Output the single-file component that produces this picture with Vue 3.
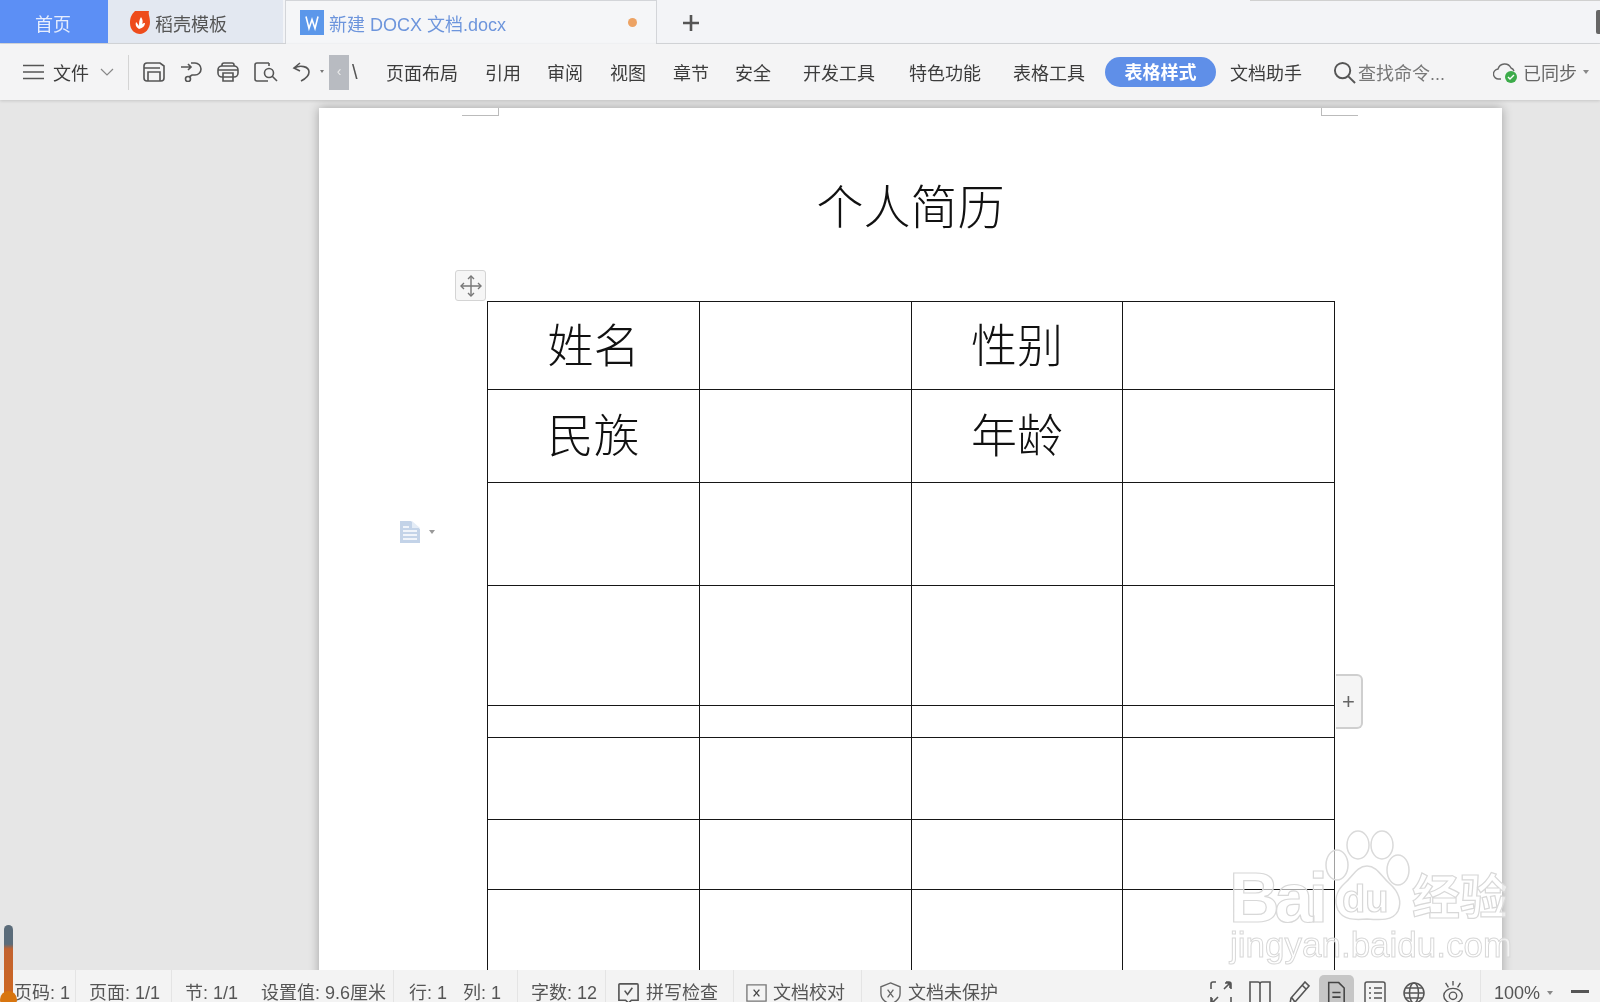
<script setup>
const navItems = [
  { label: '页面布局', cls: 'n0' }, { label: '引用', cls: 'n1' }, { label: '审阅', cls: 'n2' },
  { label: '视图', cls: 'n1' }, { label: '章节', cls: 'n1' }, { label: '安全', cls: 'n2' },
  { label: '开发工具', cls: 'n3' }, { label: '特色功能', cls: 'n4' }, { label: '表格工具', cls: 'n3' },
]
const rows = [
  ['姓名', '', '性别', ''], ['民族', '', '年龄', ''], ['', '', '', ''], ['', '', '', ''],
  ['', '', '', ''], ['', '', '', ''], ['', '', '', ''], ['', '', '', ''],
]
</script>

<template>
  <div class="app">
    <header class="tabbar">
      <div class="tab home">首页</div>
      <div class="tab template">
        <svg class="flame" viewBox="0 0 20 23"><path d="M5 0h14c-1 3 1 6 1 11 0 7-5 12-10 12S0 19 0 12C0 6 2 3 5 0z" fill="#ee4c1c"/><path d="M9 18c-3-2-4-4-3-7 1 1 2 2 3 4 0-3 0-6 2-9 2 3 2 5 1 7 1-1 2-1 3-1 0 3-2 5-6 6z" fill="#fff"/></svg>
        <span>稻壳模板</span>
      </div>
      <div class="tab doc">
        <span class="wicon"><svg viewBox="0 0 24 24"><path d="M6 6l3 12 3-9 3 9 3-12" fill="none" stroke="#fff" stroke-width="1.6"/></svg></span>
        <span class="doc-name">新建 DOCX 文档.docx</span>
        <span class="dot"></span>
      </div>
      <div class="plus">
        <svg viewBox="0 0 18 18"><path d="M9 1v16M1 9h16" stroke="#555" stroke-width="2.6"/></svg>
      </div>
      <div class="corner-handle"></div>
    </header>

    <nav class="toolbar">
      <svg class="ic-menu" viewBox="0 0 21 16"><path d="M0 1.5h21M0 8h21M0 14.500h21" stroke="#555" stroke-width="1.6"/></svg>
      <span class="file">文件</span>
      <svg class="ic-chev" viewBox="0 0 14 8"><path d="M1 1l6 6 6-6" fill="none" stroke="#888" stroke-width="1.2"/></svg>
      <span class="tb-div"></span>
      <svg class="qi first" viewBox="0 0 22 20" fill="none" stroke="#555" stroke-width="1.6"><path d="M4 1h13l4 3v12a3 3 0 0 1-3 3H4a3 3 0 0 1-3-3V4a3 3 0 0 1 3-3z"/><path d="M1 6h16M5 19V10h12v9"/></svg>
      <svg class="qi" viewBox="0 0 22 20" fill="none" stroke="#555" stroke-width="1.6"><path d="M1 5h10M8 2l3 3-3 3"/><path d="M11 1h4a6 6 0 0 1 0 12h-3l-3 2"/><circle cx="8" cy="17" r="2.500"/></svg>
      <svg class="qi" viewBox="0 0 22 20" fill="none" stroke="#555" stroke-width="1.6"><path d="M5 4V3a2 2 0 0 1 2-2h8a2 2 0 0 1 2 2v1"/><rect x="1" y="4" width="20" height="11" rx="4"/><path d="M1 8h20M6 11v8h10v-8z"/></svg>
      <svg class="qi wide" viewBox="0 0 24 20" fill="none" stroke="#555" stroke-width="1.6"><path d="M15 1H3a2 2 0 0 0-2 2v14a2 2 0 0 0 2 2h11"/><path d="M15 1v3"/><circle cx="15" cy="11" r="4.500"/><path d="M18 14l5 5"/></svg>
      <svg class="qi undo" viewBox="0 0 19 20" fill="none" stroke="#555" stroke-width="1.6"><path d="M8 1L2 6l6 3"/><path d="M2 6c6-3 15-2 15 4 0 4-4 7-8 9"/></svg>
      <span class="tick"></span>
      <span class="collapse">‹</span>
      <span class="frag">\</span>
      <span v-for="n in navItems" :key="n.label" class="nav" :class="n.cls">{{ n.label }}</span>
      <span class="pill">表格样式</span>
      <span class="nav helper">文档助手</span>
      <svg class="ic-search" viewBox="0 0 24 24" fill="none" stroke="#555" stroke-width="2"><circle cx="10" cy="10" r="8"/><path d="M16 16l7 7"/></svg>
      <span class="search">查找命令...</span>
      <svg class="ic-cloud" viewBox="0 0 26 22"><path d="M8 18H6a5 5 0 0 1-1-10 7 7 0 0 1 13-1 5 5 0 0 1 3 3" fill="none" stroke="#666" stroke-width="1.4"/><circle cx="18" cy="16" r="6" fill="#3cab4a"/><path d="M15 16l2 2 4-4" fill="none" stroke="#fff" stroke-width="1.4"/></svg>
      <span class="sync">已同步</span>
      <span class="caret"></span>
    </nav>

    <main class="canvas">
      <section class="page">
        <i class="crop crop-l"></i>
        <i class="crop crop-r"></i>
        <h1 class="title">个人简历</h1>
        <div class="table-wrap">
          <span class="move">
            <svg viewBox="0 0 24 24" fill="none" stroke="#777" stroke-width="1.4"><path d="M12 2v20M2 12h20"/><path d="M9 5l3-3 3 3M9 19l3 3 3-3M5 9l-3 3 3 3M19 9l3 3-3 3"/></svg>
          </span>
          <span class="para">
            <svg viewBox="0 0 20 22"><path d="M0 0h11l9 8v14H0z" fill="#c3d3e8"/><path d="M3 10h14M3 14h14M3 18h14M3 6h6" stroke="#fff" stroke-width="1.5"/><path d="M12 0v7h8" fill="#e4ecf6"/></svg>
            <b></b>
          </span>
          <table class="sheet">
            <tbody>
              <tr v-for="(row, i) in rows" :key="i">
                <td v-for="(cell, j) in row" :key="j">{{ cell }}</td>
              </tr>
            </tbody>
          </table>
          <span class="add">+</span>
        </div>
      </section>
    </main>

    <footer class="status">
      <div class="st-left">
        <span class="st s1">页码: 1</span>
        <span class="st s2">页面: 1/1</span>
        <span class="st s3">节: 1/1<em class="gap1"></em>设置值: 9.6厘米</span>
        <span class="st s4">行: 1<em class="gap2"></em>列: 1</span>
        <span class="st s5">字数: 12</span>
        <span class="st s6">
          <svg viewBox="0 0 24 24" fill="none" stroke="#555" stroke-width="1.7"><path d="M3 2h18a1 1 0 0 1 1 1v16h-7l-3 3-3-3H2V3a1 1 0 0 1 1-1z"/><path d="M8 9l3 4 5-7"/></svg>
          拼写检查
        </span>
        <span class="st s7">
          <svg viewBox="0 0 24 24" fill="none" stroke="#777" stroke-width="1.4"><path d="M6 3H2v17h4M18 3h4v17h-4M6 3h12M6 20h12"/><path d="M9 8l6 7M15 8l-6 7" stroke="#444"/></svg>
          文档校对
        </span>
        <span class="st s8">
          <svg viewBox="0 0 24 24" fill="none" stroke="#666" stroke-width="1.4"><path d="M12 1l10 4v7c0 5-4 9-10 11C6 21 2 17 2 12V5z"/><path d="M9 8l6 8M15 8l-6 8"/></svg>
          文档未保护
        </span>
      </div>
      <div class="st-right">
        <svg class="si" viewBox="0 0 22 24" fill="none" stroke="#555" stroke-width="1.6"><path d="M1 8V3a2 2 0 0 1 2-2h3M16 1h3a2 2 0 0 1 2 2v5M21 16v5a2 2 0 0 1-2 2h-3M6 23H3a2 2 0 0 1-2-2v-5M15 2h5v5M20 2l-6 6M2 22l6-6M2 17v5h5"/></svg>
        <svg class="si" viewBox="0 0 22 24" fill="none" stroke="#555" stroke-width="1.6"><path d="M11 3c0-1-1-2-2-2H1v22h10zM11 3c0-1 1-2 2-2h8v22H11"/></svg>
        <svg class="si" viewBox="0 0 22 24" fill="none" stroke="#555" stroke-width="1.6"><path d="M17 1l4 4L7 21l-5 2 1-6zM14 4l4 4M4 17l3 4"/></svg>
        <span class="si-active"><svg viewBox="0 0 22 26" fill="none" stroke="#444" stroke-width="1.7"><path d="M3 1h11l6 6v18H3z"/><path d="M7 12h9M7 17h9"/></svg></span>
        <svg class="si" viewBox="0 0 22 24" fill="none" stroke="#555" stroke-width="1.5"><rect x="1" y="1" width="20" height="22" rx="2"/><path d="M5 7h2M10 7h8M5 12h2M10 12h8M5 17h2M10 17h8"/></svg>
        <svg class="si" viewBox="0 0 22 22" fill="none" stroke="#555" stroke-width="1.5"><circle cx="11" cy="11" r="10"/><ellipse cx="11" cy="11" rx="4.500" ry="10"/><path d="M1 11h20M2 6h18M2 16h18"/></svg>
        <svg class="si" viewBox="0 0 22 26" fill="none" stroke="#555" stroke-width="1.5"><path d="M11 0v5M3 2l3 5M19 2l-3 5"/><ellipse cx="11" cy="16" rx="10" ry="8"/><circle cx="11" cy="16" r="4"/></svg>
        <span class="st-div"></span>
        <span class="zoom">100%</span>
        <span class="caret zc"></span>
        <span class="minus"></span>
      </div>
    </footer>

    <div class="thermo"><span class="bulb"></span></div>

    <div class="mark" aria-hidden="true">
      <svg class="paw" viewBox="0 0 85 92" fill="rgba(255,255,255,0.6)" stroke="#dadada" stroke-width="1.5">
        <ellipse cx="12" cy="35" rx="11" ry="15"/>
        <ellipse cx="33" cy="15" rx="11" ry="14"/>
        <ellipse cx="57" cy="15" rx="11" ry="14"/>
        <ellipse cx="73" cy="40" rx="11" ry="15"/>
        <path d="M42 36c-10 0-14 10-22 17-9 8-11 18-7 27 5 10 16 10 29 9 13 1 26 2 31-8 4-9 1-19-8-27-9-8-13-18-23-18z"/>
      </svg>
      <span class="m-bai">Bai</span>
      <span class="m-du">du</span>
      <span class="m-cn">经验</span>
      <span class="m-url">jingyan.baidu.com</span>
    </div>
  </div>
</template>

<style>
html, body { margin: 0; height: 100%; overflow: hidden; }
</style>

<style scoped>
.app {
  position: relative;
  width: 1600px;
  height: 1002px;
  overflow: hidden;
  display: flex;
  flex-direction: column;
  font-family: "Liberation Sans", "Noto Sans CJK SC", sans-serif;
  font-size: 18px;
  color: #3c3c3c;
  background: #e6e6e6;
  filter: blur(0.4px);
}

/* tab bar */
.tabbar {
  position: relative;
  flex: none;
  height: 44px;
  display: flex;
  background: #f3f4f7;
  border-bottom: 1px solid #d6d8db;
  box-sizing: border-box;
}
.tab { display: flex; align-items: center; box-sizing: border-box; height: 43px; }
.home { width: 108px; padding: 2px 0 0 35px; background: #5c8ff5; color: #e6edfd; }
.template { width: 175px; padding: 2px 0 0 22px; gap: 5px; background: #e3e8f1; color: #555; }
.flame { width: 20px; height: 23px; }
.doc {
  width: 372px;
  height: 44px;
  margin-left: 2px;
  padding-left: 14px;
  background: #f5f6f8;
  border: 1px solid #d3d5d9;
  border-bottom: 0;
  z-index: 1;
}
.wicon { width: 24px; height: 25px; background: #5b97ea; margin-right: 5px; display: flex; }
.wicon svg { width: 24px; height: 25px; }
.doc-name { color: #6d95dc; flex: 1; }
.dot { width: 9px; height: 9px; border-radius: 50%; background: #eda364; margin-right: 19px; }
.plus { margin-left: 25px; padding-top: 14px; }
.plus svg { width: 18px; height: 18px; display: block; }
.corner-handle {
  position: absolute;
  right: 0;
  top: 10px;
  width: 4px;
  height: 24px;
  background: #666;
  border-radius: 2px 0 0 2px;
}
.tabbar::after {
  content: "";
  position: absolute;
  top: 0;
  left: 1250px;
  right: 0;
  height: 1px;
  background: #d0d0d0;
}

/* toolbar */
.toolbar {
  position: relative;
  z-index: 2;
  flex: none;
  height: 56px;
  padding-left: 23px;
  box-sizing: border-box;
  display: flex;
  align-items: center;
  background: #f4f4f5;
  box-shadow: 0 1px 3px rgba(0, 0, 0, 0.14);
}
.ic-menu { width: 21px; height: 16px; flex: none; }
.file { margin-left: 9px; width: 36px; flex: none; }
.ic-chev { width: 14px; height: 8px; margin-left: 11px; flex: none; }
.tb-div { width: 1px; height: 35px; background: #d4d4d4; margin-left: 14px; flex: none; }
.qi { width: 22px; height: 20px; margin-left: 15px; flex: none; }
.qi.first { margin-left: 14px; }
.qi.wide { width: 24px; }
.qi.undo { width: 19px; margin-left: 14px; }
.tick { width: 0; height: 0; margin-left: 9px; border: 2px solid transparent; border-top: 3px solid #777; flex: none; }
.collapse {
  width: 20px;
  height: 35px;
  margin-left: 5px;
  background: #b8bbc1;
  color: #eaeaea;
  font-size: 14px;
  line-height: 33px;
  text-align: center;
  flex: none;
}
.frag { width: 10px; margin-left: 3px; color: #555; font-size: 20px; flex: none; }
.nav { flex: none; }
.n0 { margin-left: 24px; }
.n1 { margin-left: 27px; }
.n2 { margin-left: 26px; }
.n3 { margin-left: 32px; }
.n4 { margin-left: 34px; }
.pill {
  flex: none;
  width: 111px;
  height: 30px;
  margin-left: 20px;
  border-radius: 15px;
  background: #5f8fe8;
  color: #fff;
  font-weight: 700;
  line-height: 32px;
  text-align: center;
}
.helper { margin-left: 14px; }
.ic-search { width: 23px; height: 23px; margin-left: 31px; flex: none; }
.search { margin-left: 2px; width: 88px; color: #777; flex: none; white-space: nowrap; }
.ic-cloud { width: 26px; height: 22px; margin-left: 47px; flex: none; }
.sync { margin-left: 4px; color: #666; flex: none; }
.caret { width: 0; height: 0; margin-left: 6px; border: 3px solid transparent; border-top: 4px solid #888; border-bottom: 0; flex: none; }

/* canvas */
.canvas {
  position: relative;
  flex: 1;
  min-height: 0;
  overflow: hidden;
  padding: 8px 0 0 319px;
  background: #e6e6e6;
}
.page {
  position: relative;
  width: 1183px;
  height: 1000px;
  background: #fff;
  box-shadow: 0 0 10px rgba(0, 0, 0, 0.3);
}
.crop { position: absolute; top: 0; width: 36px; height: 7px; border-bottom: 1px solid #bbb; }
.crop-l { left: 143px; border-right: 1px solid #bbb; }
.crop-r { right: 144px; border-left: 1px solid #bbb; }
.title {
  margin: 0;
  padding-top: 63px;
  height: 130px;
  font-family: "Noto Sans CJK SC", sans-serif;
  font-size: 47px;
  font-weight: 300;
  line-height: 66px;
  text-align: center;
  color: #111;
}
.table-wrap { position: relative; margin-left: 168px; width: 848px; }
.sheet {
  width: 848px;
  table-layout: fixed;
  border-collapse: collapse;
  font-family: "Noto Sans CJK SC", sans-serif;
  font-size: 46px;
  font-weight: 300;
  color: #111;
  text-align: center;
}
.sheet td { border: 1px solid #161616; padding: 0 0 8px; line-height: 1; }
.sheet tr:nth-child(1) { height: 88px; }
.sheet tr:nth-child(2) { height: 93px; }
.sheet tr:nth-child(3) { height: 103px; }
.sheet tr:nth-child(4) { height: 120px; }
.sheet tr:nth-child(5) { height: 32px; }
.sheet tr:nth-child(6) { height: 82px; }
.sheet tr:nth-child(7) { height: 70px; }
.sheet tr:nth-child(8) { height: 120px; }
.sheet tr:nth-child(n+3) td { padding: 0; }
.move {
  position: absolute;
  left: -32px;
  top: -31px;
  width: 29px;
  height: 29px;
  border: 1px solid #d4d4d4;
  border-radius: 3px;
  background: #f6f6f6;
  display: flex;
  align-items: center;
  justify-content: center;
}
.move svg { width: 24px; height: 24px; }
.para { position: absolute; left: -87px; top: 220px; }
.para svg { width: 20px; height: 22px; display: block; }
.para b {
  position: absolute;
  left: 29px;
  top: 9px;
  width: 0;
  height: 0;
  border: 3px solid transparent;
  border-top: 4px solid #999;
  border-bottom: 0;
}
.add {
  position: absolute;
  left: 849px;
  top: 373px;
  width: 27px;
  height: 55px;
  box-sizing: border-box;
  border: 2px solid #cfcfcf;
  border-left: 0;
  border-radius: 0 6px 6px 0;
  background: #f5f5f5;
  color: #666;
  font-size: 22px;
  line-height: 52px;
  text-align: center;
}

/* status bar */
.status {
  position: relative;
  flex: none;
  height: 32px;
  display: flex;
  justify-content: space-between;
  background: #f3f3f3;
  color: #555;
  overflow: hidden;
}
.st-left { display: flex; }
.st {
  box-sizing: border-box;
  height: 32px;
  padding-top: 10px;
  line-height: 26px;
  border-right: 1px solid #e4e4e4;
  white-space: nowrap;
  display: flex;
  align-items: flex-start;
}
.st em { display: inline-block; }
.gap1 { width: 23px; }
.gap2 { width: 16px; }
.st svg { width: 23px; height: 23px; margin-top: 2px; flex: none; }
.s1 { width: 76px; padding-left: 14px; }
.s2 { width: 96px; padding-left: 13px; }
.s3 { width: 222px; padding-left: 13px; }
.s4 { width: 124px; padding-left: 15px; }
.s5 { width: 88px; padding-left: 13px; }
.s6 { width: 128px; padding-left: 11px; gap: 6px; }
.s7 { width: 128px; padding-left: 11px; gap: 5px; }
.s8 { width: 200px; padding-left: 17px; gap: 6px; border-right: 0; }
.st-right { display: flex; align-items: flex-start; padding-right: 11px; }
.si { width: 22px; height: 24px; margin: 11px 0 0 17px; flex: none; }
.si-active {
  width: 35px;
  height: 32px;
  margin: 5px 0 0 9px;
  border-radius: 5px 5px 0 0;
  background: #c6c6c6;
  display: flex;
  justify-content: center;
  padding-top: 6px;
  box-sizing: border-box;
}
.si-active svg { width: 20px; height: 25px; }
.si-active + .si { margin-left: 10px; }
.st-div { width: 1px; height: 32px; margin-left: 16px; background: #e4e4e4; }
.zoom { margin: 10px 0 0 13px; line-height: 26px; }
.zc { margin: 21px 0 0 7px; }
.minus { width: 18px; height: 3px; margin: 20px 0 0 18px; background: #555; }

/* temperature widget over the window */
.thermo {
  position: absolute;
  left: 4px;
  top: 925px;
  width: 9px;
  height: 80px;
  border-radius: 5px 5px 0 0;
  background: linear-gradient(to bottom, #5b6c7a 0 24%, #c2622f 30%, #d0691f 100%);
}
.bulb {
  position: absolute;
  left: -4px;
  top: 66px;
  width: 17px;
  height: 17px;
  border-radius: 50%;
  background: #d8750f;
}

/* watermark */
.mark {
  position: absolute;
  left: 1228px;
  top: 828px;
  width: 290px;
  height: 140px;
  font-family: "Liberation Sans", "Noto Sans CJK SC", sans-serif;
  color: rgba(255, 255, 255, 0.6);
  -webkit-text-stroke: 1.2px #d8d8d8;
}
.paw { position: absolute; left: 97px; top: 2px; width: 85px; height: 92px; }
.m-bai { position: absolute; left: 1px; top: 40px; font-size: 70px; line-height: 60px; font-weight: 700; letter-spacing: -5px; }
.m-du { position: absolute; left: 114px; top: 51px; font-size: 38px; line-height: 40px; font-weight: 700; }
.m-cn { position: absolute; left: 184px; top: 42px; font-size: 48px; line-height: 56px; font-weight: 700; }
.m-url { position: absolute; left: 2px; top: 101px; font-size: 35px; line-height: 32px; -webkit-text-stroke-width: 1px; }
</style>
